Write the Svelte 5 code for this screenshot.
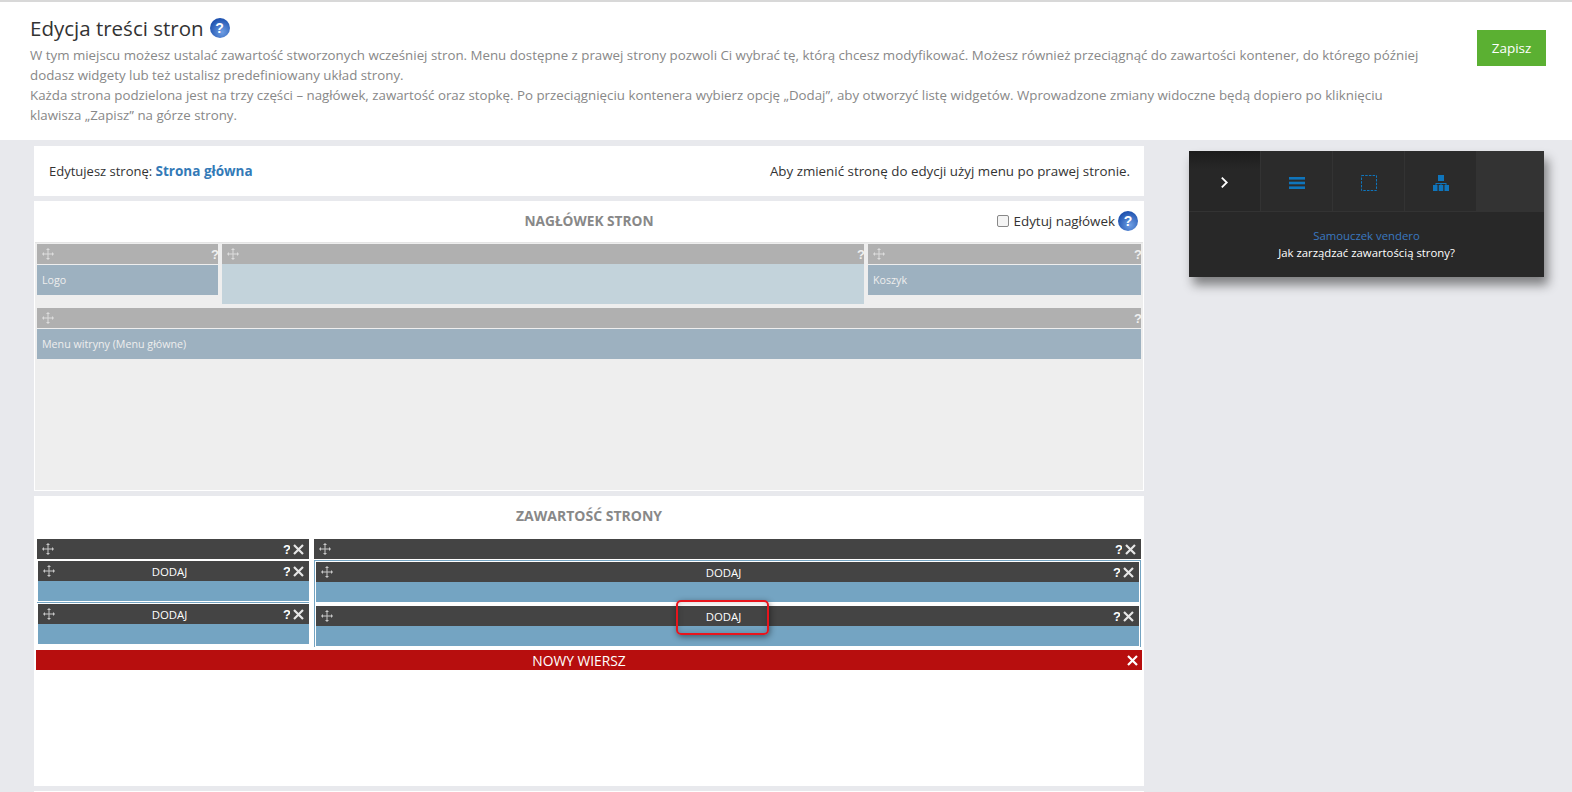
<script>
  const headerRow = [
    { label: "Logo", icon: true },
    { label: "", icon: false, empty: true },
    { label: "Koszyk", icon: true },
  ];
</script>

{#snippet move(color)}
  <svg class="move" viewBox="0 0 12 12" width="12" height="12" fill={color} stroke={color}>
    <path d="M6 1.5v9M1.5 6h9" stroke-width="1" fill="none" />
    <path d="M6 0l2 2H4zM6 12l2-2H4zM0 6l2-2v4zM12 6l-2-2v4z" stroke="none" />
  </svg>
{/snippet}

{#snippet close()}
  <svg class="close" viewBox="0 0 11 11" width="11" height="11">
    <path d="M1 1l9 9M10 1l-9 9" stroke="#e6e6e6" stroke-width="2.2" fill="none" />
  </svg>
{/snippet}

{#snippet help()}
  <span class="help">?</span>
{/snippet}

{#snippet darkbar(withAdd)}
  <div class="darkbar">
    {@render move("#c8c8c8")}
    {#if withAdd}<span class="add">DODAJ</span>{/if}
    <span class="q">?</span>
    {@render close()}
  </div>
{/snippet}

<div class="page">
  <header class="top">
    <div class="intro">
      <h1>Edycja treści stron {@render help()}</h1>
      <p>
        W tym miejscu możesz ustalać zawartość stworzonych wcześniej stron. Menu dostępne z prawej strony pozwoli Ci wybrać tę, którą chcesz modyfikować. Możesz również przeciągnąć do zawartości kontener, do którego później<br />
        dodasz widgety lub też ustalisz predefiniowany układ strony.<br />
        Każda strona podzielona jest na trzy części – nagłówek, zawartość oraz stopkę. Po przeciągnięciu kontenera wybierz opcję „Dodaj”, aby otworzyć listę widgetów. Wprowadzone zmiany widoczne będą dopiero po kliknięciu<br />
        klawisza „Zapisz” na górze strony.
      </p>
    </div>
    <button class="save">Zapisz</button>
  </header>

  <div class="main">
    <div class="content">
      <section class="current">
        <span>Edytujesz stronę: <b>Strona główna</b></span>
        <span class="hint">Aby zmienić stronę do edycji użyj menu po prawej stronie.</span>
      </section>

      <section class="card head-card">
        <div class="card-title">
          <h2>NAGŁÓWEK STRON</h2>
          <label class="edit-head">
            <span class="check"></span>
            Edytuj nagłówek
            {@render help()}
          </label>
        </div>
        <div class="head-area">
          <div class="head-row">
            {#each headerRow as col}
              <div class="head-col">
                <div class="graybar">
                  {@render move("#dcdcdc")}
                  <span class="q">?</span>
                </div>
                {#if col.empty}
                  <div class="light"></div>
                {:else}
                  <div class="widget">{col.label}</div>
                {/if}
              </div>
            {/each}
          </div>
          <div class="head-col">
            <div class="graybar">
              {@render move("#dcdcdc")}
              <span class="q">?</span>
            </div>
            <div class="widget">Menu witryny (Menu główne)</div>
          </div>
        </div>
      </section>

      <section class="card body-card">
        <h2 class="body-title">ZAWARTOŚĆ STRONY</h2>
        <div class="columns">
          <div class="column">
            {@render darkbar(false)}
            <div class="slots left">
              <div class="slot">{@render darkbar(true)}<div class="fill"></div></div>
              <div class="slot">{@render darkbar(true)}<div class="fill"></div></div>
            </div>
          </div>
          <div class="column">
            {@render darkbar(false)}
            <div class="slots right">
              <div class="slot">{@render darkbar(true)}<div class="fill"></div></div>
              <div class="slot last">
                {@render darkbar(true)}<div class="fill"></div>
                <div class="highlight"></div>
              </div>
            </div>
          </div>
        </div>
        <div class="new-row">
          <span>NOWY WIERSZ</span>
          <svg viewBox="0 0 11 11" width="11" height="11">
            <path d="M1 1l9 9M10 1l-9 9" stroke="#fff" stroke-width="2.2" fill="none" />
          </svg>
        </div>
      </section>

      <section class="next-card"></section>
    </div>

    <aside class="panel">
      <div class="tabs">
        <div class="tab active">
          <svg viewBox="0 0 10 14" width="9" height="13"><path d="M2 1.5L7.5 7 2 12.5" stroke="#fff" stroke-width="2" fill="none" /></svg>
        </div>
        <div class="tab">
          <svg viewBox="0 0 16 12" width="16" height="12" fill="#0f75bc"><rect width="16" height="2.6" /><rect y="4.7" width="16" height="2.6" /><rect y="9.4" width="16" height="2.6" /></svg>
        </div>
        <div class="tab">
          <svg viewBox="0 0 16 16" width="16" height="16"><rect x=".5" y=".5" width="15" height="15" fill="none" stroke="#0f75bc" stroke-dasharray="2.5 1.2" /></svg>
        </div>
        <div class="tab">
          <svg viewBox="0 0 16 16" width="16" height="16" fill="#0f75bc"><rect x="5" width="6" height="6" /><path d="M2.5 10V8h11v2h-1V9H8.500v1h-1V9H3.500v1z" /><rect y="10" width="4.500" height="6" /><rect x="5.750" y="10" width="4.500" height="6" /><rect x="11.500" y="10" width="4.500" height="6" /></svg>
        </div>
        <div class="tab-rest"></div>
      </div>
      <div class="tutorial">
        <a href="#tutorial">Samouczek vendero</a>
        <span>Jak zarządzać zawartością strony?</span>
      </div>
    </aside>
  </div>
</div>

<style>
  :global(body) {
    margin: 0;
    background: #e8e9ed;
    font-family: "Open Sans", "Liberation Sans", sans-serif;
    overflow: hidden;
  }

  .page {
    height: 792px;
    overflow: hidden;
  }

  .top {
    box-sizing: border-box;
    height: 140px;
    background: #fff;
    border-top: 2px solid #d8d8d8;
    display: flex;
    justify-content: space-between;
    padding: 0 26px 0 30px;
  }

  h1 {
    margin: 12px 0 0;
    font-size: 20.5px;
    line-height: 28px;
    font-weight: 400;
    color: #333;
    display: flex;
    align-items: center;
    gap: 6px;
  }

  p {
    margin: 3px 0 0;
    font-size: 13.3px;
    line-height: 20px;
    color: #888;
  }

  .help {
    display: inline-flex;
    align-items: center;
    justify-content: center;
    width: 20px;
    height: 20px;
    border-radius: 50%;
    background: radial-gradient(circle at 60% 70%, #6f9fe4, #1c50ae 75%);
    color: #fff;
    font-size: 14px;
    font-weight: 700;
    font-family: "Liberation Sans", sans-serif;
  }

  .save {
    margin-top: 28px;
    width: 69px;
    height: 36px;
    border: 0;
    background: #5bb032;
    color: #fff;
    font: 400 13.5px "Open Sans", sans-serif;
    flex: none;
  }

  .main {
    display: flex;
    padding: 6px 0 0 34px;
  }

  .content {
    width: 1110px;
    flex: none;
    display: flex;
    flex-direction: column;
    gap: 5px;
  }

  .current {
    height: 50px;
    background: #fff;
    display: flex;
    justify-content: space-between;
    align-items: center;
    padding: 0 14px 0 15px;
    font-size: 13px;
    color: #333;
  }

  .current b {
    color: #337ab7;
    font-size: 13.5px;
  }

  .hint {
    font-size: 13.35px;
  }

  .card {
    background: #fff;
    box-sizing: border-box;
  }

  h2 {
    margin: 0;
    font-size: 13.7px;
    font-weight: 700;
    color: #888;
    line-height: 20px;
    text-align: center;
  }

  .head-card {
    height: 290px;
    padding: 0 1px 1px;
    display: flex;
    flex-direction: column;
  }

  .card-title {
    height: 41px;
    flex: none;
    position: relative;
    display: flex;
    align-items: center;
    justify-content: center;
    padding-bottom: 2px;
    box-sizing: border-box;
  }

  .edit-head {
    position: absolute;
    right: 5px;
    top: 10px;
    display: flex;
    align-items: center;
    gap: 3px;
    font-size: 13.4px;
    color: #333;
  }

  .check {
    width: 10px;
    height: 10px;
    border: 1px solid #888;
    border-radius: 2px;
    background: #f4f4f4;
    margin-right: 2px;
  }

  .head-area {
    flex: 1;
    background: #eee;
    padding: 1px 2px 2px;
    display: flex;
    flex-direction: column;
    gap: 0;
    border-top: 1px solid #e4e4e4;
  }

  .head-row {
    display: grid;
    grid-template-columns: 181px 642px 273px;
    gap: 4px;
    height: 64px;
    align-items: start;
  }

  .graybar {
    height: 20px;
    background: #b0b0b0;
    display: flex;
    align-items: center;
    justify-content: space-between;
    padding-left: 5px;
  }

  .q {
    color: #efefef;
    font: 700 13px "Liberation Sans", sans-serif;
    width: 7px;
    overflow: hidden;
  }

  .widget {
    box-sizing: border-box;
    height: 30px;
    margin-top: 1px;
    background: #9db1c0;
    color: #eee;
    font-size: 10.7px;
    line-height: 30px;
    padding-left: 5px;
  }

  .light {
    height: 40px;
    background: #c3d3db;
  }

  .body-card {
    height: 290px;
    padding: 0 2px;
  }

  .body-title {
    height: 43px;
    line-height: 40px;
    font-size: 14px;
  }

  .columns {
    display: grid;
    grid-template-columns: 272px 827px;
    gap: 5px;
    padding: 0 1px;
  }

  .darkbar {
    height: 20px;
    background: #444;
    display: flex;
    align-items: center;
    padding: 0 5px;
    position: relative;
    color: #fff;
  }

  .darkbar .q {
    margin-left: auto;
    margin-right: 3px;
    color: #fff;
  }

  .add {
    position: absolute;
    left: 0;
    right: 8px;
    text-align: center;
    font-size: 11.4px;
  }

  .slots {
    height: 88px;
    box-sizing: border-box;
  }

  .left {
    padding-top: 2px;
  }

  .left .slot {
    margin-left: 1px;
    padding-bottom: 3px;
  }

  .left .slot:first-child {
    border-bottom: 1px solid #74a4c2;
    margin: 0 0 1px;
    padding: 0 0 1px 1px;
  }

  .right {
    border: 1px solid #74a4c2;
    border-bottom: 0;
    height: 87px;
    margin-top: 1px;
    padding-top: 1px;
  }

  .right .slot {
    margin: 0 0 0 1px;
    padding-right: 1px;
    position: relative;
  }

  .right .slot:first-child {
    padding-bottom: 3px;
    border-bottom: 0;
  }

  .right .slot.last {
    padding-top: 1px;
  }

  .fill {
    height: 20px;
    background: #74a4c2;
  }

  .highlight {
    position: absolute;
    left: 360px;
    top: -5px;
    width: 93px;
    height: 35px;
    box-sizing: border-box;
    border: 2px solid #e8141c;
    border-radius: 5px;
    box-shadow: 1px 2px 6px rgba(0, 0, 0, 0.45), inset 0 0 6px rgba(0, 0, 0, 0.2);
  }

  .new-row {
    margin: 3px 0 0;
    height: 20px;
    padding-right: 20px;
    background: #b70e0e;
    color: #fff;
    font-size: 13.8px;
    display: flex;
    align-items: center;
    justify-content: center;
    position: relative;
  }

  .new-row svg {
    position: absolute;
    right: 4px;
    top: 5px;
  }

  .next-card {
    height: 20px;
    background: #fff;
  }

  .panel {
    margin: 5px 0 0 45px;
    width: 355px;
    height: 126px;
    background: #282828;
    box-shadow: 4px 8px 10px rgba(0, 0, 0, 0.45);
    flex: none;
    display: flex;
    flex-direction: column;
  }

  .tabs {
    height: 61px;
    display: flex;
    border-bottom: 1px solid #333;
    box-sizing: border-box;
  }

  .tab {
    width: 72px;
    background: #2b2b2b;
    border-right: 1px solid #333;
    box-sizing: border-box;
    display: flex;
    align-items: center;
    justify-content: center;
    padding-top: 3px;
  }

  .tab.active {
    background: linear-gradient(#1c1c1c, #272727 30%);
  }

  .tab-rest {
    flex: 1;
    background: #333;
  }

  .tutorial {
    flex: 1;
    display: flex;
    flex-direction: column;
    align-items: center;
    font-size: 11.35px;
    line-height: 17px;
    padding-top: 15px;
    color: #fff;
  }

  .tutorial a {
    color: #3a78c0;
    text-decoration: none;
  }
</style>
